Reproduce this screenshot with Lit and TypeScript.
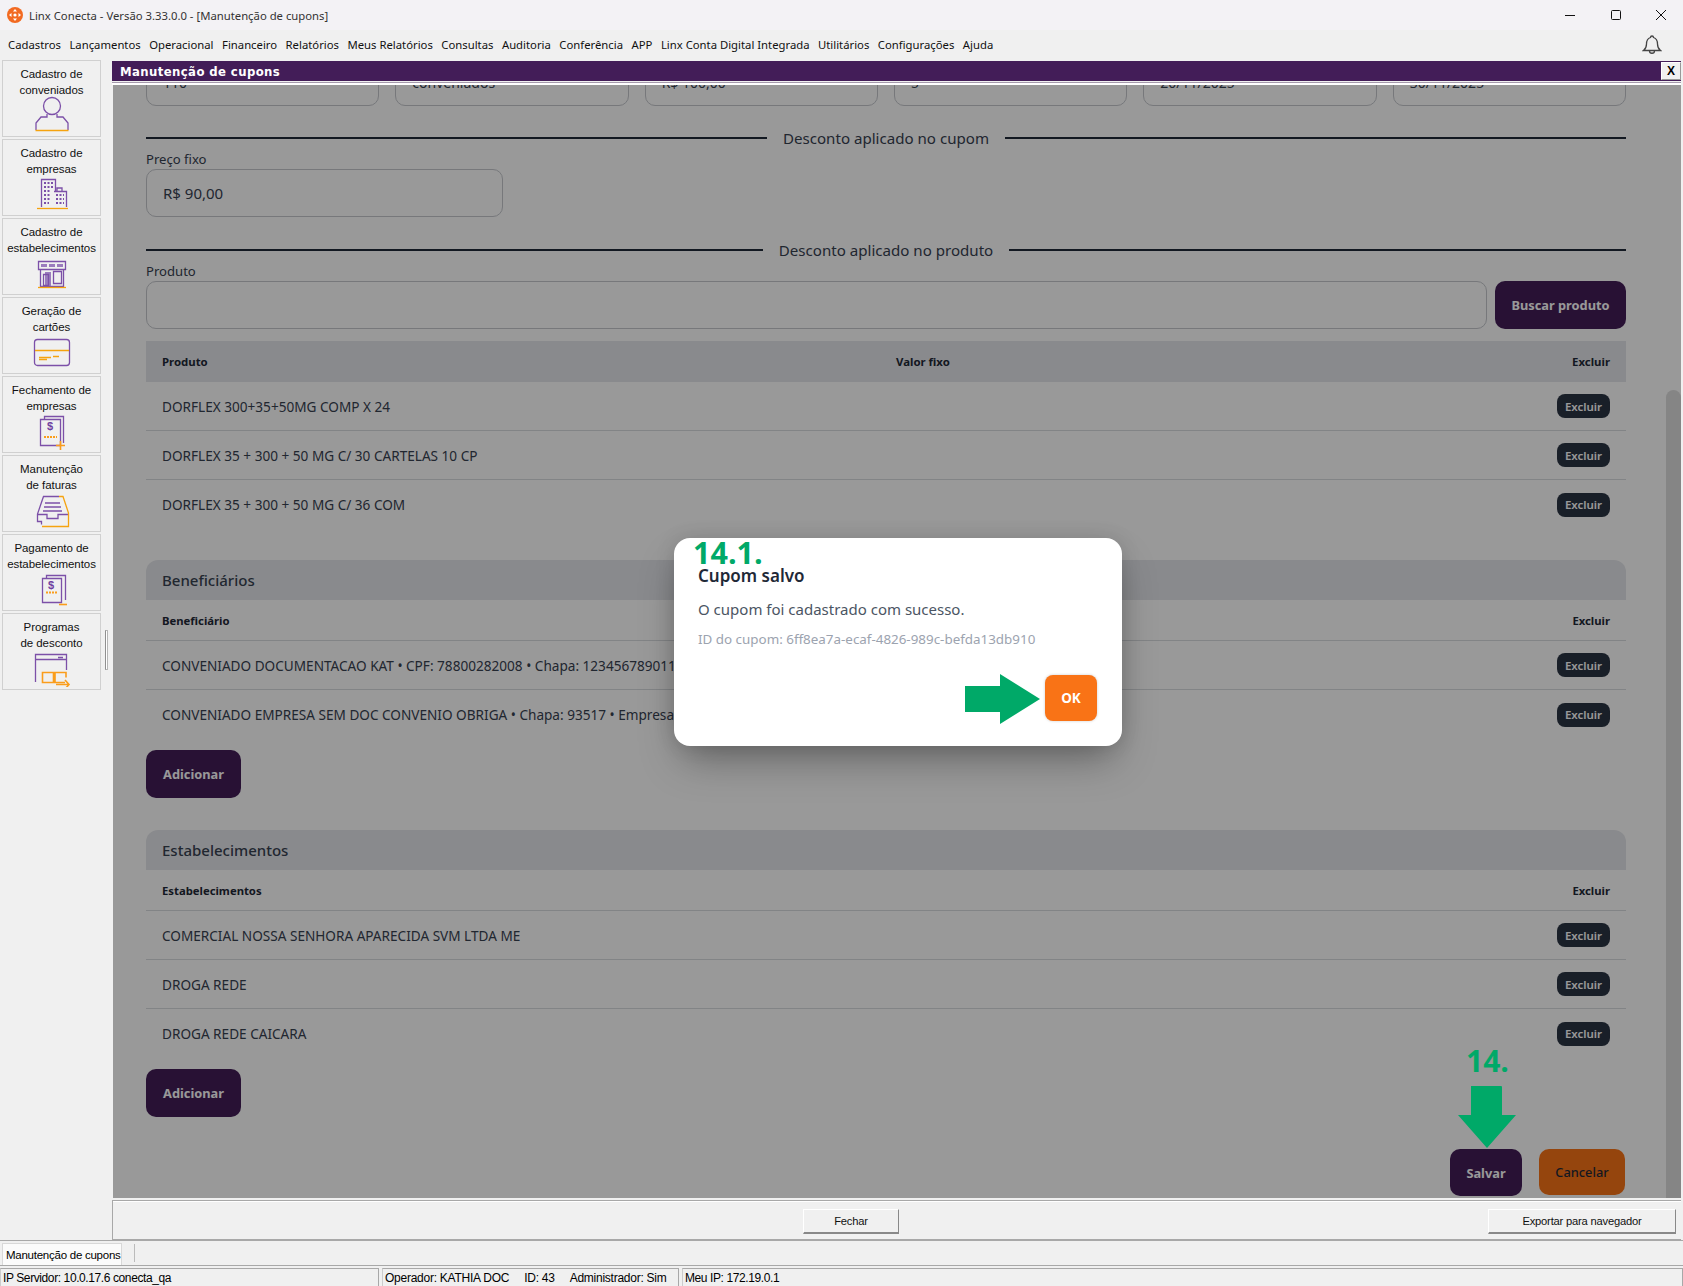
import { LitElement, html, css } from "lit";
import { customElement } from "lit/decorators.js";

const MENU = ["Cadastros","Lançamentos","Operacional","Financeiro","Relatórios","Meus Relatórios","Consultas","Auditoria","Conferência","APP","Linx Conta Digital Integrada","Utilitários","Configurações","Ajuda"];

const ICONS = [
  html`<svg class="ic" viewBox="0 0 40 38"><circle class="p" cx="20" cy="10" r="8.5"/><path class="p" d="M15 18v3H9l-5 6v7M25 18v3h6l5 6v7"/><path class="o" d="M3.500 34.500h33"/></svg>`,
  html`<svg class="ic" viewBox="0 0 40 38"><path class="p" d="M9.500 32V4.500h14V16M22 16.500h12.500V32M25 16v-3h5v3"/><path class="d" d="M12 8h9M12 12h9M12 16h6M12 20h6M12 24h6M12 28h5M24 20h8M24 24h8M24 28h8"/><path class="o" d="M5 33.500h31"/></svg>`,
  html`<svg class="ic" viewBox="0 0 40 38"><path class="p" d="M8.500 15v17.500h23V15M6.500 7.500h27v8h-27z"/><path class="f" d="M9 10h6v3H9zM17 10h6v3h-6zM25 10h6v3h-6zM13 18h6v14h-6z"/><path class="p" d="M11.500 20.500h5v11h-5zM21.500 17.500h8v12h-8z"/><path class="o" d="M6 33.500h28"/></svg>`,
  html`<svg class="ic" viewBox="0 0 40 38"><rect class="p" x="2.500" y="6.500" width="35" height="26" rx="3"/><path class="o" d="M3 17.500h34M7 24.500h12M21 23.500h6M7 26.500h8"/></svg>`,
  html`<svg class="ic" viewBox="0 0 40 38"><path class="p" d="M12.500 7V4.500h19V31M8.500 7.500h20v26h-20z"/><text class="s" x="15" y="18">$</text><path class="dash" d="M12 25h13"/><path class="o2" d="M24 33.500h9M28.500 29v9"/></svg>`,
  html`<svg class="ic" viewBox="0 0 40 38"><path class="p" d="M9.500 33.500V30.500H5.500V23L11.500 5.500H27M13 12h15M12 16h17M11 20h19M5.500 23.500H15V27.500H26V23.500H36"/><path class="o" d="M27 5.500h4L36.500 22V35.500H10"/></svg>`,
  html`<svg class="ic" viewBox="0 0 40 38"><path class="p" d="M14.500 8V5.500h19V30M10.500 8.500h19v24h-19z"/><text class="s" x="16" y="19">$</text><path class="dash" d="M14 22.500h12"/><path class="o2" d="M27 34.500h8"/></svg>`,
  html`<svg class="ic" viewBox="0 0 40 38"><path class="p" d="M3.500 33V5.500h31V21M4 10.500h30M26 8.500h5"/><path class="o2" d="M10.500 23.500h11v10h-11zM33 33.500h-10v-10h11v5M24 35.500h13M33 31l4 4.500-4 4.500"/></svg>`,
];

const TILES = [
  ["Cadastro de","conveniados"],["Cadastro de","empresas"],["Cadastro de","estabelecimentos"],["Geração de","cartões"],
  ["Fechamento de","empresas"],["Manutenção","de faturas"],["Pagamento de","estabelecimentos"],["Programas","de desconto"],
];

const FIELDS = ["110","conveniados","R$ 100,00","5","20/11/2025","30/11/2025"];

@customElement("app-root")
export class AppRoot extends LitElement {
  static styles = css`
    :host { display: block; width: 1683px; height: 1286px; overflow: hidden; background: #f0f0f0; font-family: "Liberation Sans", sans-serif; color: #000; }
    .title { height: 30px; background: #f3f2f5; display: flex; align-items: center; font: 11.300px "Noto Sans", sans-serif; color: #333; position: relative; }
    .logo { width: 16px; height: 16px; margin: 0 6px 0 7px; flex: none; }
    .wc { margin-left: auto; display: flex; gap: 23.500px; margin-right: 11px; }
    .wc svg { width: 22px; height: 12px; fill: none; stroke: #111; stroke-width: 1; display: block; }
    .menu { height: 30px; display: flex; align-items: center; gap: 8.500px; padding: 0 0 2px 8px; font: 11.300px "Noto Sans", sans-serif; color: #111; box-sizing: border-box; }
    .bell { margin-left: auto; margin-right: 21px; width: 20px; height: 22px; margin-top: 2px; fill: none; stroke: #444; stroke-width: 1.300; }
    .main { height: 1180px; display: flex; }
    .side { width: 112px; flex: none; box-sizing: border-box; padding: 0 0 0 2px; display: flex; flex-direction: column; gap: 2px; position: relative; }
    .tile { width: 99px; height: 77px; box-sizing: border-box; border: 1px solid #d0d0d0; padding-top: 5px; display: flex; flex-direction: column; align-items: center; font-size: 11.500px; line-height: 16px; letter-spacing: -.05px; color: #111; white-space: nowrap; }
    .ic { width: 40px; height: 38px; margin-top: -2px; fill: none; flex: none; }
    .p { stroke: #7c50a8; stroke-width: 1.300; fill: none; }
    .d { stroke: #7c50a8; stroke-width: 2; stroke-dasharray: 2 1.500; fill: none; }
    .f { fill: #9b7cbd; stroke: none; }
    .o { stroke: #f5a30f; stroke-width: 1.300; fill: none; }
    .o2 { stroke: #fa9d1c; stroke-width: 1.600; fill: none; }
    .dash { stroke: #fa9d1c; stroke-width: 2; stroke-dasharray: 2 1; fill: none; }
    .s { fill: #6f3fa0; font: bold 11px "Liberation Sans", sans-serif; }
    .grip { position: absolute; left: 105px; top: 570px; width: 3px; height: 40px; border: 1px solid #b5b5b5; border-left-color: #8f8f8f; background: #fff; box-sizing: border-box; }
    .right { flex: 1; min-width: 0; display: flex; flex-direction: column; padding-top: 1px; width: 1569px; margin-right: 2px; }
    .wbar { height: 20px; background: #431d58; flex: none; color: #fff; font: bold 11.700px "DejaVu Sans", sans-serif; letter-spacing: .4px; display: flex; align-items: center; padding: 2px 0 0 8px; position: relative; box-sizing: border-box; }
    .x { position: absolute; right: 0; top: 1px; width: 20px; height: 18px; background: #f0f0f0; color: #000; font: bold 12px "Liberation Sans", sans-serif; border: 1px solid #fff; box-sizing: border-box; border-right-color: #999; border-bottom-color: #999; display: flex; align-items: center; justify-content: center; letter-spacing: 0; }
    .seps { height: 4px; flex: none; box-sizing: border-box; background: #fff; border-top: 1px solid #f0f0f0; border-bottom: 0; position: relative; }
    .seps::before { content: ""; display: block; height: 1px; background: #a59aac; }
    .content { height: 1113px; flex: none; background: #fff; margin-left: 1px; position: relative; overflow: hidden; display: flex; font: 14px "Noto Sans", sans-serif; color: #1f2937; }
    .scroll { flex: 1; min-width: 0; padding-left: 33px; }
    .inner { width: 1480px; margin-top: -26px; display: flex; flex-direction: column; }
    .track { width: 15px; padding-top: 305px; flex: none; display: flex; }
    .thumb { flex: 1; background: #dedede; border-radius: 8px 8px 0 0; }
    .r6 { display: grid; grid-template-columns: repeat(6, 1fr); gap: 16px; }
    .field { height: 47px; box-sizing: border-box; border: 1px solid #c6c9ce; border-radius: 10px; padding: 0 16px; display: flex; align-items: center; font-size: 14px; color: #374151; background: #fff; }
    .bigval { font-size: 15px; height: 48px; }
    .div { display: flex; align-items: center; gap: 16px; height: 20px; margin-top: 22px; font-size: 15.100px; color: #374151; }
    .div2 { margin-top: 23px; }
    .div::before, .div::after { content: ""; flex: 1; height: 2px; background: #1f2937; }
    .lab { font-size: 13.100px; line-height: 20px; height: 20px; margin-top: 1px; color: #374151; }
    .w1 { width: 357px; }
    .prow { display: flex; gap: 8px; }
    .prow .field { flex: 1; height: 48px; }
    .btn { background: #431d58; color: #fff; font-weight: 700; font-size: 12.800px; border-radius: 10px; display: flex; align-items: center; justify-content: center; height: 48px; box-sizing: border-box; }
    .bus { width: 131px; flex: none; }
    .thead, .row, .sub { display: grid; grid-template-columns: 734px 1fr 100px; padding: 0 16px; align-items: center; font-size: 13.600px; box-sizing: border-box; }
    .thead { height: 41px; background: #e5e7eb; margin-top: 12px; font-weight: 700; font-size: 11.400px; }
    .row { height: 49px; border-bottom: 1px solid #d9dce0; color: #374151; white-space: nowrap; }
    .row.last { border-bottom: 0; }
    .sub { height: 41px; border-bottom: 1px solid #d9dce0; font-weight: 700; font-size: 11.300px; }
    .end { text-align: right; justify-self: end; }
    .ex { justify-self: end; width: 53px; height: 24px; border-radius: 8px; background: #2b3444; color: #fff; font-size: 11.500px; font-weight: 600; display: flex; align-items: center; justify-content: center; }
    .sec { height: 40px; background: #e5e7eb; border-radius: 12px 12px 0 0; padding: 0 16px; display: flex; align-items: center; font-size: 15px; font-weight: 500; color: #374151; }
    .s1 { margin-top: 31px; }
    .s2 { margin-top: 32px; }
    .add { width: 95px; margin-top: 11px; }
    .foot { display: flex; justify-content: flex-end; gap: 17px; margin-top: 32px; }
    .salvar { width: 72px; height: 47px; }
    .cancel { width: 86px; height: 46px; background: #f97316; color: #1f2937; font-weight: 500; margin-right: 1px; }
    .ov { position: absolute; inset: 0; background: rgba(0,0,0,.4); }
    .modal { position: absolute; left: 561px; top: 453px; width: 448px; height: 208px; background: #fff; border-radius: 16px; box-shadow: 0 20px 40px -8px rgba(0,0,0,.35), 0 0 20px rgba(0,0,0,.12); box-sizing: border-box; padding: 28px 24px 0; color: #1f2937; }
    .mt { font-size: 17px; font-weight: 600; line-height: 20px; }
    .mb { font-size: 15px; line-height: 20px; margin-top: 13px; color: #4b5563; }
    .mi { font-size: 13.400px; line-height: 18px; margin-top: 11px; color: #9ca3af; }
    .ok { position: absolute; left: 371px; top: 137px; width: 52px; height: 46px; background: #f97316; color: #fff; font-size: 13.500px; font-weight: 700; border-radius: 8px; display: flex; align-items: center; justify-content: center; box-shadow: 0 0 3px rgba(0,0,0,.2); }
    .tag { position: absolute; color: #00a968; font: 700 30.500px "Open Sans", sans-serif; line-height: 30px; white-space: nowrap; }
    .t1 { left: 19px; top: -1px; }
    .t2 { left: 1353px; top: 961px; font-size: 30px; }
    .arr { position: absolute; fill: #00a968; }
    .a1 { left: 290px; top: 136px; width: 76px; height: 50px; }
    .a2 { left: 1344px; top: 1000px; width: 60px; height: 64px; }
    .bot { height: 40px; flex: none; margin-top: 2px; box-sizing: border-box; border-top: 1px solid #a8a8a8; border-left: 1px solid #a8a8a8; border-bottom: 1px solid #a8a8a8; padding-top: 8px; display: flex; align-items: flex-start; position: relative; font-size: 11.200px; box-shadow: inset 0 1px 0 #fff; }
    .wb { height: 25px; box-sizing: border-box; background: #f0f0f0; border: 1px solid #fff; border-right-color: #888; border-bottom: 2px solid #888; display: flex; align-items: center; justify-content: center; color: #111; letter-spacing: -.2px; }
    .fe { margin-left: 690px; width: 96px; }
    .exp { margin-left: auto; margin-right: 5px; width: 188px; }
    .tabs { height: 26px; box-sizing: border-box; border-top: 1px solid #a8a8a8; border-bottom: 1px solid #a8a8a8; display: flex; align-items: flex-end; padding-left: 2px; font-size: 11.500px; letter-spacing: -.25px; }
    .tab { width: 120px; height: 22px; background: #fbfbfb; border: 1px solid #d8d8d8; border-bottom: 0; box-sizing: border-box; display: flex; align-items: center; padding-left: 3px; white-space: nowrap; }
    .tsep { width: 1px; height: 18px; background: #bbb; margin-left: 12px; align-self: center; }
    .status { height: 20px; padding-top: 2px; box-sizing: border-box; display: flex; gap: 3px; font-size: 12px; letter-spacing: -.4px; }
    .st { box-sizing: border-box; height: 18px; border: 1px solid #a8a8a8; border-bottom: 0; border-left-color: #ccc; display: flex; align-items: center; padding-left: 2px; white-space: nowrap; }
    .st1 { width: 379px; }
    .st2 { width: 297px; gap: 15px; padding-left: 2px; letter-spacing: -.25px; }
    .st3 { flex: 1; }
  `;

  private rowsOf(items: string[]) {
    return items.map((t, i) => html`<div class="row ${i === items.length - 1 ? "last" : ""}"><div>${t}</div><div></div><div class="ex">Excluir</div></div>`);
  }

  render() {
    return html`
      <div class="title">
        <svg class="logo" viewBox="0 0 16 16"><circle cx="8" cy="8" r="8" fill="#f26a21"/><path d="M8 2l2 2.500H6zM8 14l-2-2.500h4zM2 8l2.500-2v4zM14 8l-2.500 2V6z" fill="#fff"/><circle cx="8" cy="8" r="1.600" fill="#fff"/></svg>
        <span>Linx Conecta - Versão 3.33.0.0 - [Manutenção de cupons]</span>
        <div class="wc">
          <svg viewBox="0 0 22 12"><path d="M6 6.500h10"/></svg>
          <svg viewBox="0 0 22 12"><rect x="6.500" y="1.500" width="9" height="9" rx="1"/></svg>
          <svg viewBox="0 0 22 12"><path d="M6 1l10 10M16 1L6 11"/></svg>
        </div>
      </div>
      <div class="menu">
        ${MENU.map((m) => html`<span>${m}</span>`)}
        <svg class="bell" viewBox="0 0 20 22"><path d="M10 2a1.500 1.500 0 0 1 1.500 1.500c3 1 4 3.500 4 6.500 0 3 1 5 3 6.500H1.500c2-1.500 3-3.500 3-6.500 0-3 1-5.500 4-6.500A1.500 1.500 0 0 1 10 2zM7.500 17c0 3 5 3 5 0"/></svg>
      </div>
      <div class="main">
        <div class="side">
          ${TILES.map((t, i) => html`<div class="tile"><span>${t[0]}</span><span>${t[1]}</span>${ICONS[i]}</div>`)}
          <div class="grip"></div>
        </div>
        <div class="right">
          <div class="wbar">Manutenção de cupons<div class="x">X</div></div>
          <div class="seps"></div>
          <div class="content">
            <div class="scroll"><div class="inner">
              <div class="r6">${FIELDS.map((f) => html`<div class="field">${f}</div>`)}</div>
              <div class="div">Desconto aplicado no cupom</div>
              <div class="lab">Preço fixo</div>
              <div class="field w1 bigval">R$ 90,00</div>
              <div class="div div2">Desconto aplicado no produto</div>
              <div class="lab">Produto</div>
              <div class="prow"><div class="field"></div><div class="btn bus">Buscar produto</div></div>
              <div class="thead"><div>Produto</div><div>Valor fixo</div><div class="end">Excluir</div></div>
              ${this.rowsOf(["DORFLEX 300+35+50MG COMP X 24","DORFLEX 35 + 300 + 50 MG C/ 30 CARTELAS 10 CP","DORFLEX 35 + 300 + 50 MG C/ 36 COM"])}
              <div class="sec s1">Beneficiários</div>
              <div class="sub"><div>Beneficiário</div><div></div><div class="end">Excluir</div></div>
              ${this.rowsOf(["CONVENIADO DOCUMENTACAO KAT • CPF: 78800282008 • Chapa: 12345678901112","CONVENIADO EMPRESA SEM DOC CONVENIO OBRIGA • Chapa: 93517 • Empresa: 1"])}
              <div class="btn add">Adicionar</div>
              <div class="sec s2">Estabelecimentos</div>
              <div class="sub"><div>Estabelecimentos</div><div></div><div class="end">Excluir</div></div>
              ${this.rowsOf(["COMERCIAL NOSSA SENHORA APARECIDA SVM LTDA ME","DROGA REDE","DROGA REDE CAICARA"])}
              <div class="btn add">Adicionar</div>
              <div class="foot"><div class="btn salvar">Salvar</div><div class="btn cancel">Cancelar</div></div>
            </div></div>
            <div class="track"><div class="thumb"></div></div>
            <div class="ov"></div>
            <div class="tag t2">14.</div>
            <svg class="arr a2" viewBox="0 0 60 64"><path d="M14 1h30a1 1 0 0 1 1 1v28h14L30 63 1 30h13z"/></svg>
            <div class="modal">
              <div class="tag t1">14.1.</div>
              <div class="mt">Cupom salvo</div>
              <div class="mb">O cupom foi cadastrado com sucesso.</div>
              <div class="mi">ID do cupom: 6ff8ea7a-ecaf-4826-989c-befda13db910</div>
              <svg class="arr a1" viewBox="0 0 76 50"><path d="M1 12h35V0l40 25-40 25V38H1z"/></svg>
              <div class="ok">OK</div>
            </div>
          </div>
          <div class="bot"><div class="wb fe">Fechar</div><div class="wb exp">Exportar para navegador</div></div>
        </div>
      </div>
      <div class="tabs"><div class="tab">Manutenção de cupons</div><div class="tsep"></div></div>
      <div class="status">
        <div class="st st1">IP Servidor: 10.0.17.6 conecta_qa</div>
        <div class="st st2"><span>Operador: KATHIA DOC</span><span>ID: 43</span><span>Administrador: Sim</span></div>
        <div class="st st3">Meu IP: 172.19.0.1</div>
      </div>
    `;
  }
}
